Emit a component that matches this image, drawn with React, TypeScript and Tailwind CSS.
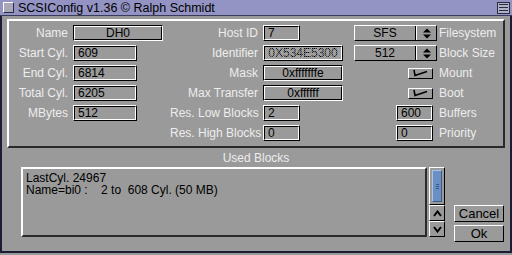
import React from "react";

const font = "font-['Liberation_Sans',Arial,sans-serif]";

function Label({ children }: { children?: React.ReactNode }) {
  return (
    <div className="pr-[5px] text-right text-[12px] leading-[14px] text-[#ededed] whitespace-nowrap">
      {children}
    </div>
  );
}

function Field({
  children,
  w,
  center,
  dither,
}: {
  children?: React.ReactNode;
  w: string;
  center?: boolean;
  dither?: boolean;
}) {
  return (
    <div
      className={`${w} h-[16px] border border-t-white border-l-white border-b-black border-r-black`}
    >
      <div
        className={`relative h-full border border-t-black border-l-black border-b-white border-r-white flex items-center px-[3px] text-[12px] leading-[12px] text-black ${
          center ? "justify-center" : ""
        }`}
      >
        {children}
        {dither && (
          <span className="absolute inset-0 opacity-60 bg-[image:repeating-conic-gradient(#b4b4b4_0_25%,transparent_0_50%)] bg-[length:2px_2px]" />
        )}
      </div>
    </div>
  );
}

function Display({ children, w }: { children?: React.ReactNode; w: string }) {
  return (
    <div
      className={`${w} h-[16px] border border-t-black border-l-black border-b-white border-r-white`}
    >
      <div className="h-full border border-t-white border-l-white border-b-black border-r-black flex items-center justify-center text-[12px] leading-[12px] text-black">
        {children}
      </div>
    </div>
  );
}

function Cycle({ children }: { children?: React.ReactNode }) {
  return (
    <div className="w-[83px] h-[16px] flex border border-t-white border-l-white border-b-black border-r-black text-[12px] leading-[12px] text-black">
      <div className="w-[61px] flex items-center justify-center border-r border-r-black">
        {children}
      </div>
      <div className="flex-1 flex items-center justify-center border-l border-l-white">
        <svg width="8" height="11" viewBox="0 0 8 11">
          <polygon points="0,4.5 4,0.5 8,4.5" fill="#000" />
          <polygon points="0,6.5 4,10.5 8,6.5" fill="#000" />
        </svg>
      </div>
    </div>
  );
}

function Check() {
  return (
    <div className="w-[25px] h-[11px] mr-[4px] border border-t-white border-l-white border-b-black border-r-black flex items-center justify-center">
      <svg width="19" height="8" viewBox="0 0 19 8">
        <polyline points="3,1 4,6.5 16,2.5" fill="none" stroke="#000" strokeWidth="1.6" />
      </svg>
    </div>
  );
}

function Button({ children }: { children?: React.ReactNode }) {
  return (
    <div className="w-[50px] h-[17px] border border-t-white border-l-white border-b-black border-r-black flex items-center justify-center text-[13px] leading-[13px] text-black">
      {children}
    </div>
  );
}

export default function App() {
  return (
    <div className={`${font} w-[512px] h-[255px] bg-[#9a9a9a] overflow-hidden flex flex-col`}>
      {/* title bar */}
      <div className="h-[16px] bg-[#9494c4] flex items-center border-b border-b-[#3a3a5a]">
        <div className="ml-[3px] w-[11px] h-[11px] border border-t-white border-l-white border-b-[#2a2a40] border-r-[#2a2a40] bg-[#a8a8b8]" />
        <div className="ml-[4px] text-[12.5px] leading-[14px] text-black whitespace-nowrap">
          SCSIConfig v1.36 © Ralph Schmidt
        </div>
        <div className="ml-auto mr-[2px] w-[13px] h-[12px] border border-[#2a2a40] bg-[#b0b0c8] flex flex-col justify-center gap-[2px] px-[1px]">
          <div className="h-[1px] bg-[#2a2a40]" />
          <div className="h-[1px] bg-[#2a2a40]" />
          <div className="h-[1px] bg-[#2a2a40]" />
        </div>
      </div>

      {/* body */}
      <div className="flex-1 flex flex-col border-l-2 border-l-[#1c1c34] border-r-2 border-r-[#1c1c34] border-b-2 border-b-[#1c1c34] mb-[2px]">
        <div className="mx-[5px] mt-[3px] h-[129px] border-2 border-t-[#ffffff] border-l-[#ffffff] border-b-[#2a2a2a] border-r-[#2a2a2a] pt-[2px]">
          <div className="grid grid-cols-[64px_97px_93px_87px_87px_1fr] auto-rows-[20px] items-center">
            <Label>Name</Label>
            <Display w="w-[90px]">DH0</Display>
            <Label>Host ID</Label>
            <Field w="w-[37px]">7</Field>
            <div className="flex justify-end">
              <Cycle>SFS</Cycle>
            </div>
            <div className="pl-[2px] text-[12px] text-[#ededed]">Filesystem</div>

            <Label>Start Cyl.</Label>
            <Field w="w-[64px]">609</Field>
            <Label>Identifier</Label>
            <Field w="w-[80px]" center dither>
              0X534E5300
            </Field>
            <div className="flex justify-end">
              <Cycle>512</Cycle>
            </div>
            <div className="pl-[2px] text-[12px] text-[#ededed]">Block Size</div>

            <Label>End Cyl.</Label>
            <Field w="w-[64px]">6814</Field>
            <Label>Mask</Label>
            <Display w="w-[80px]">0xfffffffe</Display>
            <div className="flex justify-end">
              <Check />
            </div>
            <div className="pl-[2px] text-[12px] text-[#ededed]">Mount</div>

            <Label>Total Cyl.</Label>
            <Field w="w-[64px]">6205</Field>
            <Label>Max Transfer</Label>
            <Display w="w-[80px]">0xffffff</Display>
            <div className="flex justify-end">
              <Check />
            </div>
            <div className="pl-[2px] text-[12px] text-[#ededed]">Boot</div>

            <Label>MBytes</Label>
            <Field w="w-[64px]">512</Field>
            <Label>Res. Low Blocks</Label>
            <Field w="w-[37px]">2</Field>
            <div className="flex justify-end pr-[4px]">
              <Field w="w-[37px]">600</Field>
            </div>
            <div className="pl-[2px] text-[12px] text-[#ededed]">Buffers</div>

            <div />
            <div />
            <Label>Res. High Blocks</Label>
            <Field w="w-[37px]">0</Field>
            <div className="flex justify-end pr-[4px]">
              <Field w="w-[37px]">0</Field>
            </div>
            <div className="pl-[2px] text-[12px] text-[#ededed]">Priority</div>
          </div>
        </div>

        <div className="mt-[3px] text-center text-[12px] leading-[14px] text-[#ededed]">Used Blocks</div>

        <div className="mt-[2px] flex items-start pl-[19px]">
          <div className="w-[406px] h-[70px] border-2 border-t-white border-l-white border-b-[#2a2a2a] border-r-[#2a2a2a] pl-[3px] pt-[3px] text-[12px] leading-[12px] text-black whitespace-pre">
            <div>LastCyl. 24967</div>
            <div>Name=bi0 :    2 to  608 Cyl. (50 MB)</div>
          </div>
          <div className="ml-[2px] w-[16px] flex flex-col">
            <div className="h-[38px] border border-t-white border-l-white border-b-black border-r-black p-[2px]">
              <div className="h-full bg-[#6b8fc2] border border-t-[#a8c4e8] border-l-[#a8c4e8] border-b-[#3c5a86] border-r-[#3c5a86] flex flex-col items-center justify-center gap-[1px]">
                <div className="w-[3px] h-[1px] bg-[#3c5a86]" />
                <div className="w-[3px] h-[1px] bg-[#3c5a86]" />
                <div className="w-[3px] h-[1px] bg-[#3c5a86]" />
              </div>
            </div>
            <div className="h-[16px] border border-t-white border-l-white border-b-black border-r-black flex items-center justify-center">
              <svg width="9" height="7" viewBox="0 0 9 7">
                <polyline points="1,6 4.5,1.5 8,6" fill="none" stroke="#000" strokeWidth="2" />
              </svg>
            </div>
            <div className="h-[16px] border border-t-white border-l-white border-b-black border-r-black flex items-center justify-center">
              <svg width="9" height="7" viewBox="0 0 9 7">
                <polyline points="1,1 4.5,5.5 8,1" fill="none" stroke="#000" strokeWidth="2" />
              </svg>
            </div>
          </div>
          <div className="ml-[9px] mt-[38px] flex flex-col gap-[3px]">
            <Button>Cancel</Button>
            <Button>Ok</Button>
          </div>
        </div>
      </div>
    </div>
  );
}
